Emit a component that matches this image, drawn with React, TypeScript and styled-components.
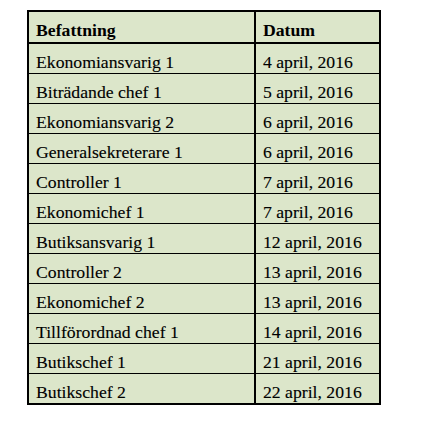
import React from 'react';
import styled, { createGlobalStyle } from 'styled-components';

const rows: [string, string][] = [
  ['Ekonomiansvarig 1', '4 april, 2016'],
  ['Biträdande chef 1', '5 april, 2016'],
  ['Ekonomiansvarig 2', '6 april, 2016'],
  ['Generalsekreterare 1', '6 april, 2016'],
  ['Controller 1', '7 april, 2016'],
  ['Ekonomichef 1', '7 april, 2016'],
  ['Butiksansvarig 1', '12 april, 2016'],
  ['Controller 2', '13 april, 2016'],
  ['Ekonomichef 2', '13 april, 2016'],
  ['Tillförordnad chef 1', '14 april, 2016'],
  ['Butikschef 1', '21 april, 2016'],
  ['Butikschef 2', '22 april, 2016'],
];

const App: React.FC = () => {
  return (
    <>
      <GlobalStyle />
      <Page>
        <Table>
          <thead>
            <tr>
              <HeadCell $first>Befattning</HeadCell>
              <HeadCell>Datum</HeadCell>
            </tr>
          </thead>
          <tbody>
            {rows.map(([title, date], i) => (
              <tr key={title}>
                <Cell $first $top={i > 0}>{title}</Cell>
                <Cell $top={i > 0}>{date}</Cell>
              </tr>
            ))}
          </tbody>
        </Table>
      </Page>
    </>
  );
};

export default App;

const GlobalStyle = createGlobalStyle`
  *, *::before, *::after {
    box-sizing: border-box;
  }
  body {
    margin: 0;
    background: #ffffff;
  }
`;

const Page = styled.div`
  padding: 10px 0 0 27px;
  width: 421px;
  height: 421px;
`;

const Table = styled.table`
  border-collapse: separate;
  border-spacing: 0;
  border: 2px solid #000;
  background: #dce6ca;
  font-family: 'Liberation Serif', 'Times New Roman', serif;
  font-size: 17.7px;
  color: #000;
  table-layout: fixed;
  width: 354px;
`;

const HeadCell = styled.th<{ $first?: boolean }>`
  width: ${(p) => (p.$first ? '227px' : '123px')};
  height: 32px;
  padding: 0 7px 2px;
  text-align: left;
  vertical-align: bottom;
  font-weight: bold;
  line-height: 1;
  white-space: nowrap;
  border-bottom: 2px solid #000;
  border-right: ${(p) => (p.$first ? '2px solid #000' : 'none')};
`;

const Cell = styled.td<{ $first?: boolean; $top?: boolean }>`
  height: ${(p) => (p.$top ? '30px' : '29px')};
  padding: 0 7px 1px;
  vertical-align: bottom;
  line-height: 1;
  white-space: nowrap;
  -webkit-text-stroke: 0.12px #000;
  border-top: ${(p) => (p.$top ? '1px solid #000' : 'none')};
  border-right: ${(p) => (p.$first ? '2px solid #000' : 'none')};
`;
